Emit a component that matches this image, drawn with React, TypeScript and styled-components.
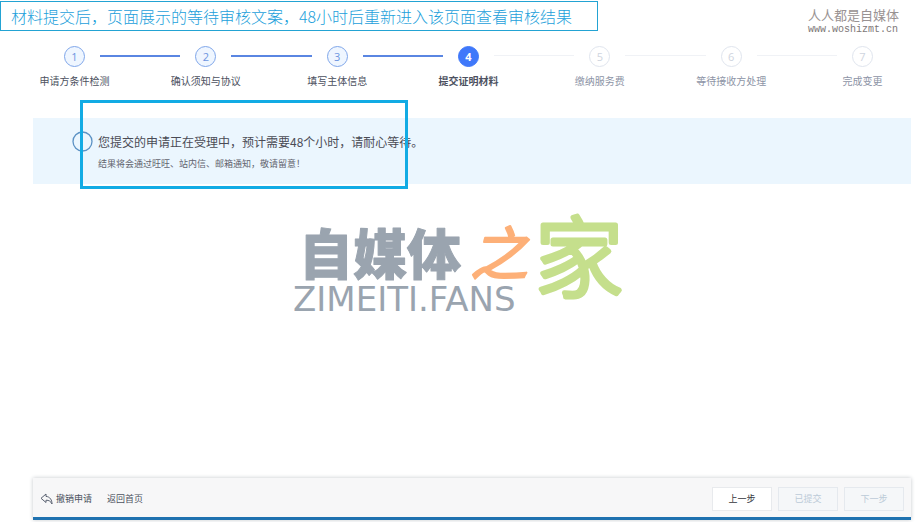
import React from "react";
import styled, { createGlobalStyle, css } from "styled-components";

const GlobalStyle = createGlobalStyle`
  *, *::before, *::after { box-sizing: border-box; }
  body {
    margin: 0;
    background: #fff;
    color: #4c505c;
    font-family: "Noto Sans CJK SC", sans-serif;
  }
  h1, p, ol { margin: 0; padding: 0; }
`;

const Page = styled.div`
  display: flex;
  flex-direction: column;
  min-height: 100vh;
  padding-bottom: 2px;
`;

const Header = styled.header`
  display: flex;
  justify-content: space-between;
  align-items: flex-start;
  padding: 1px 16px 0 0;
`;

const Caption = styled.p`
  padding: 0 25px 0 10px;
  border: 1px solid #23a3d3;
  color: #1c9fdb;
  font-size: 16px;
  font-weight: 300;
  line-height: 28px;
  white-space: nowrap;
`;

const SiteMark = styled.div`
  padding-top: 6px;
  color: #999292;
  font-size: 13px;
  line-height: 16px;
`;

const SiteUrl = styled.div`
  font-family: "Liberation Mono", monospace;
  font-size: 10px;
  line-height: 14px;
  color: #7d7777;
`;

type Status = "done" | "current" | "pending";

const Steps = styled.ol`
  display: flex;
  align-items: flex-start;
  list-style: none;
  padding: 9px 42px 0 64px;
`;

const StepItem = styled.li`
  display: flex;
  flex-direction: column;
  align-items: center;
  flex: 0 0 21px;
  width: 21px;
`;

const dotStyles = {
  done: css`
    border-color: #7fa6ea;
    background: #eff6ff;
    color: #6c94e0;
  `,
  current: css`
    border-color: #3f78fa;
    background: #3f78fa;
    color: #fff;
    font-weight: 700;
  `,
  pending: css`
    border-color: #e0e5ee;
    background: #fff;
    color: #cfd5e0;
  `,
};

const Dot = styled.span<{ $status: Status }>`
  width: 21px;
  height: 21px;
  border: 1px solid;
  border-radius: 50%;
  font-family: "Open Sans", sans-serif;
  font-size: 11px;
  line-height: 19px;
  text-align: center;
  ${(p) => dotStyles[p.$status]}
`;

const StepLabel = styled.span<{ $status: Status }>`
  margin-top: 6px;
  color: ${(p) => (p.$status === "pending" ? "#8d94a6" : "#4c5160")};
  font-size: 10px;
  font-weight: ${(p) => (p.$status === "current" ? 700 : 400)};
  line-height: 16px;
  white-space: nowrap;
`;

const Connector = styled.li<{ $done: boolean }>`
  flex: 1;
  height: ${(p) => (p.$done ? 2 : 1)}px;
  margin: 9px 15px 0;
  background: ${(p) => (p.$done ? "#5a86e2" : "#f0f2f6")};
`;

const Notice = styled.section`
  position: relative;
  display: flex;
  align-items: flex-start;
  gap: 5px;
  margin: 29px 4px 0 33px;
  padding: 13px 16px 12px 39px;
  background: #ebf6fe;
`;

const NoticeIcon = styled.svg`
  flex: none;
  width: 21px;
  height: 21px;
`;

const NoticeTitle = styled.h1`
  color: #4a4b55;
  font-size: 12px;
  font-weight: 400;
  line-height: 21px;
`;

const NoticeText = styled.p`
  margin-top: 4px;
  color: #62646e;
  font-size: 9px;
  line-height: 16px;
`;

const Highlight = styled.div`
  position: absolute;
  top: -18px;
  bottom: -5px;
  left: 47px;
  width: 328px;
  border: 3px solid #12abe4;
  pointer-events: none;
`;

const Main = styled.main`
  flex: 1;
  padding-top: 22px;
`;

const Logo = styled.svg`
  display: block;
  width: 340px;
  height: 112px;
  margin: 0 auto;
  overflow: visible;
`;

const Footer = styled.footer`
  display: flex;
  align-items: center;
  justify-content: space-between;
  margin: 0 4px 0 33px;
  padding: 9px 7px 6px;
  border-bottom: 3px solid #1f72b0;
  background: #f7f7f8;
  box-shadow: 0 0 4px #c4c8cc;
`;

const Links = styled.nav`
  display: flex;
  align-items: center;
  gap: 15px;
`;

const FooterLink = styled.a`
  display: flex;
  align-items: center;
  gap: 3px;
  color: #4c5260;
  font-size: 9px;
  line-height: 16px;
  text-decoration: none;
`;

const Actions = styled.div`
  display: flex;
  gap: 6px;
`;

const Button = styled.button`
  width: 60px;
  height: 24px;
  padding: 0;
  border: 1px solid #e8eaed;
  background: #fff;
  color: #34363d;
  font-family: inherit;
  font-size: 9px;
  line-height: 16px;

  &:disabled {
    border-color: #e5e9ee;
    background: #f5f7f9;
    color: #bccbd8;
  }
`;

const steps: { label: string; status: Status }[] = [
  { label: "申请方条件检测", status: "done" },
  { label: "确认须知与协议", status: "done" },
  { label: "填写主体信息", status: "done" },
  { label: "提交证明材料", status: "current" },
  { label: "缴纳服务费", status: "pending" },
  { label: "等待接收方处理", status: "pending" },
  { label: "完成变更", status: "pending" },
];

const BackIcon = () => (
  <svg width="13" height="12" viewBox="0 0 13 12" fill="none" stroke="#596171" strokeLinejoin="round" aria-hidden="true">
    <path d="M6 1 1 5.3 6 9.5V7.2c3 0 4.700 1 6 3.800C12 7 10 3.700 6 3.400Z" />
  </svg>
);

export default function App() {
  return (
    <>
      <GlobalStyle />
      <Page>
        <Header>
          <Caption>材料提交后，页面展示的等待审核文案，48小时后重新进入该页面查看审核结果</Caption>
          <SiteMark>
            人人都是自媒体
            <SiteUrl>www.woshizmt.cn</SiteUrl>
          </SiteMark>
        </Header>

        <Steps>
          {steps.map((step, i) => (
            <React.Fragment key={step.label}>
              {i > 0 && <Connector $done={step.status !== "pending"} aria-hidden="true" />}
              <StepItem aria-current={step.status === "current" ? "step" : undefined}>
                <Dot $status={step.status}>{i + 1}</Dot>
                <StepLabel $status={step.status}>{step.label}</StepLabel>
              </StepItem>
            </React.Fragment>
          ))}
        </Steps>

        <Notice>
          <NoticeIcon viewBox="0 0 21 21" aria-hidden="true">
            <circle cx="10.5" cy="10.5" r="9.5" fill="none" stroke="#5c92c4" strokeWidth="1.3" />
          </NoticeIcon>
          <div>
            <NoticeTitle>您提交的申请正在受理中，预计需要48个小时，请耐心等待。</NoticeTitle>
            <NoticeText>结果将会通过旺旺、站内信、邮箱通知，敬请留意！</NoticeText>
          </div>
          <Highlight />
        </Notice>

        <Main>
          <Logo viewBox="0 0 340 112" role="img" aria-label="自媒体之家 ZIMEITI.FANS">
            <g fontFamily='"Noto Sans CJK SC", sans-serif' strokeLinejoin="round" strokeLinecap="round">
              <text x="11" y="69" fontSize="54" fontWeight="900" fill="#9aa4af" stroke="#9aa4af" strokeWidth="1">自媒体</text>
              <text x="182" y="69" fontSize="58" fontWeight="400" fontStyle="italic" fill="#fdb078" stroke="#fdb078" strokeWidth="2">之</text>
              <text x="247" y="84" fontSize="88" fontWeight="300" fill="#c5df8c" stroke="#c5df8c" strokeWidth="5">家</text>
            </g>
            <text x="5" y="105" fontFamily='"DejaVu Sans", sans-serif' fontSize="34" fill="#9aa4af">ZIMEITI.FANS</text>
          </Logo>
        </Main>

        <Footer>
          <Links>
            <FooterLink href="#cancel">
              <BackIcon />
              撤销申请
            </FooterLink>
            <FooterLink href="#home">返回首页</FooterLink>
          </Links>
          <Actions>
            <Button type="button">上一步</Button>
            <Button type="button" disabled>已提交</Button>
            <Button type="button" disabled>下一步</Button>
          </Actions>
        </Footer>
      </Page>
    </>
  );
}
